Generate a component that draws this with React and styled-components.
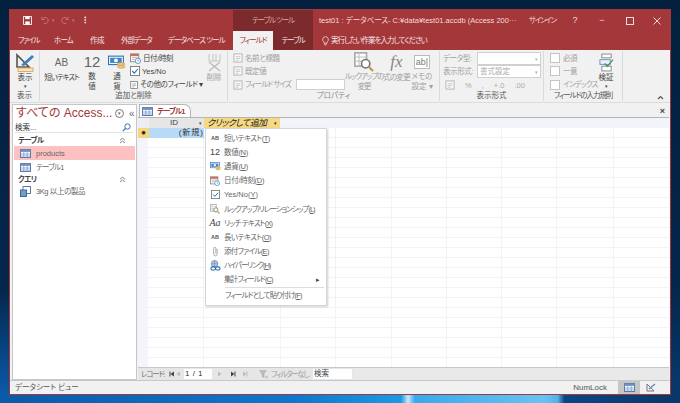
import React from 'react';
import styled, { createGlobalStyle } from 'styled-components';

const GlobalStyle = createGlobalStyle`
  html, body { margin: 0; padding: 0; }
  body {
    width: 680px;
    height: 403px;
    overflow: hidden;
    font-family: "Liberation Sans", "Noto Sans CJK JP", sans-serif;
    font-feature-settings: "palt" 1;
  }
`;

const menuItems = [
  { id: 'ab', label: '短いテキスト(T)', ls: -0.5 },
  { id: 'num', label: '数値(N)', ls: -0.3 },
  { id: 'money', label: '通貨(U)', ls: -0.3 },
  { id: 'date', label: '日付/時刻(D)', ls: -0.3 },
  { id: 'check', label: 'Yes/No(Y)', ls: 0 },
  { id: 'lookup', label: 'ルックアップ/リレーションシップ(L)', ls: -1 },
  { id: 'rich', label: 'リッチ テキスト(X)', ls: -0.8 },
  { id: 'ab2', label: '長いテキスト(O)', ls: -0.5 },
  { id: 'clip', label: '添付ファイル(E)', ls: -0.7 },
  { id: 'link', label: 'ハイパーリンク(H)', ls: -1.2 },
  { id: 'none', label: '集計フィールド(C)', ls: -0.9 },
];

function underlineKey(label) {
  const m = label.match(/^(.*\()(.)(\))$/);
  if (!m) return label;
  return <>{m[1]}<u>{m[2]}</u>{m[3]}</>;
}

const TableIcon = ({ size = 11 }) => (
  <svg width={size} height={size - 2} viewBox="0 0 11 9">
    <rect x="0.5" y="0.5" width="10" height="8" fill="#fff" stroke="#5c78a8" />
    <rect x="0.5" y="0.5" width="10" height="2.4" fill="#6f8fc4" />
    <path d="M0.5 5h10M0.5 7h10M3.8 3v5.5M7.2 3v5.5" stroke="#6f8fc4" strokeWidth="0.7" />
  </svg>
);

const SmallDoc = ({ faded }) => (
  <svg width="10" height="10" viewBox="0 0 11 11" opacity={faded ? 0.5 : 1}>
    <rect x="1" y="1" width="9" height="9" fill="#fff" stroke="#777" />
    <path d="M3 4h5M3 6h5M3 8h3" stroke="#888" strokeWidth="0.8" />
  </svg>
);

const MoneyIcon = ({ w = 17, h = 13 }) => (
  <svg width={w} height={h} viewBox="0 0 17 13">
    <rect x="0.5" y="0.5" width="14" height="8" fill="#fff" stroke="#2a6db0" />
    <rect x="2" y="2" width="11" height="5" fill="#3f86c8" />
    <circle cx="7.5" cy="4.5" r="1.8" fill="#fff" />
    <ellipse cx="12.5" cy="8" rx="3.6" ry="1.5" fill="#f2c27c" stroke="#c79044" strokeWidth="0.5" />
    <ellipse cx="12.5" cy="10.5" rx="3.6" ry="1.5" fill="#f2c27c" stroke="#c79044" strokeWidth="0.5" />
  </svg>
);

const DateIcon = ({ size = 11 }) => (
  <svg width={size} height={size} viewBox="0 0 12 12">
    <rect x="0.5" y="1" width="9" height="8.5" fill="#fff" stroke="#888" />
    <rect x="0.5" y="1" width="9" height="2.4" fill="#c9705f" />
    <path d="M2 5h6M2 7h3" stroke="#999" strokeWidth="0.8" />
    <circle cx="8.6" cy="8.6" r="2.9" fill="#fff" stroke="#5a92c8" />
    <path d="M8.6 7v1.7h1.4" stroke="#5a92c8" strokeWidth="0.7" fill="none" />
  </svg>
);

const CheckIcon = ({ size = 10 }) => (
  <svg width={size} height={size} viewBox="0 0 11 11">
    <rect x="0.5" y="0.5" width="10" height="10" fill="#fff" stroke="#777" />
    <path d="M2.5 5.5l2.2 2.3 4-4.5" stroke="#2a6db0" strokeWidth="1.2" fill="none" />
  </svg>
);

const LookupIcon = ({ size = 11 }) => (
  <svg width={size} height={size} viewBox="0 0 12 12">
    <rect x="0.5" y="0.5" width="7" height="8" fill="#fff" stroke="#aaa" />
    <path d="M0.5 3h7M0.5 5.5h7M3 0.5v8" stroke="#c4c4c4" strokeWidth="0.7" />
    <circle cx="7" cy="7" r="2.5" fill="#fff" stroke="#777" />
    <path d="M9 9l2.4 2.4" stroke="#c79044" strokeWidth="1.3" />
  </svg>
);

const ClipIcon = () => (
  <svg width="9" height="11" viewBox="0 0 10 12">
    <path d="M6.8 3v6a1.9 1.9 0 0 1-3.8 0V2.6a1.2 1.2 0 0 1 2.4 0v5.8" fill="none" stroke="#999" strokeWidth="0.9" />
  </svg>
);

const LinkIcon = () => (
  <svg width="11" height="11" viewBox="0 0 12 12">
    <circle cx="5" cy="4" r="3.5" fill="#b5c9df" stroke="#5b7fa8" strokeWidth="0.7" />
    <path d="M1.5 4h7M5 .5v7" stroke="#5b7fa8" strokeWidth="0.5" />
    <rect x="1" y="7.5" width="5" height="3.5" rx="1.7" fill="none" stroke="#2a68ad" strokeWidth="1.1" />
    <rect x="6" y="7.5" width="5" height="3.5" rx="1.7" fill="none" stroke="#2a68ad" strokeWidth="1.1" />
  </svg>
);

const FoldIcon = () => (
  <svg width="7" height="7" viewBox="0 0 7 7">
    <path d="M1 3.2l2.5-2 2.5 2M1 6l2.5-2 2.5 2" fill="none" stroke="#666" strokeWidth="0.8" />
  </svg>
);

const NavArrow = ({ dir, bar, dim }) => (
  <svg width="6" height="6" viewBox="0 0 6 6">
    <path d={dir === 'left' ? 'M5 .5v5L1.5 3z' : 'M1 .5v5L4.5 3z'} fill={dim ? '#bdbdbd' : '#444'} />
    {bar && <path d={dir === 'left' ? 'M1 .5v5' : 'M5 .5v5'} stroke={dim ? '#bdbdbd' : '#444'} />}
  </svg>
);

function MenuIcon({ id }) {
  if (id === 'ab' || id === 'ab2') return <MiniAb>AB</MiniAb>;
  if (id === 'num') return <MiniNum>12</MiniNum>;
  if (id === 'money') return <MoneyIcon w={11} h={9} />;
  if (id === 'date') return <DateIcon size={10} />;
  if (id === 'check') return <CheckIcon size={9} />;
  if (id === 'lookup') return <LookupIcon size={10} />;
  if (id === 'rich') return <MiniRich>Aa</MiniRich>;
  if (id === 'clip') return <ClipIcon />;
  if (id === 'link') return <LinkIcon />;
  return null;
}

export default function App() {
  return (
    <Desktop>
      <GlobalStyle />
      <Win>
        <TitleBar>
          <Qat>
            <svg width="9" height="9" viewBox="0 0 10 10">
              <path d="M0.5 0.5h9v9h-9z" fill="none" stroke="#fff" />
              <rect x="2.5" y="0.5" width="5" height="3" fill="#fff" />
              <rect x="2.5" y="6" width="5" height="3.5" fill="#fff" />
            </svg>
            <QatDim $left={9}>
              <svg width="8" height="8" viewBox="0 0 9 9">
                <path d="M1 1v3h3M1.5 4A3.4 3.4 0 1 1 3 8" fill="none" stroke="#c9797b" strokeWidth="1" />
              </svg>
            </QatDim>
            <QatCaret>▾</QatCaret>
            <QatDim $left={6}>
              <svg width="8" height="8" viewBox="0 0 9 9">
                <path d="M8 1v3H5M7.5 4A3.4 3.4 0 1 0 6 8" fill="none" stroke="#c9797b" strokeWidth="1" />
              </svg>
            </QatDim>
            <QatCaret>▾</QatCaret>
            <QatMore>⁝</QatMore>
          </Qat>
          <ToolsBand>テーブル ツール</ToolsBand>
          <DocTitle>test01 : データベース- C:¥data¥test01.accdb (Access 200···</DocTitle>
          <SignIn>サインイン</SignIn>
          <CtrlBtn $w={26}>?</CtrlBtn>
          <CtrlBtn $w={28}>−</CtrlBtn>
          <CtrlBtn $w={28}>
            <svg width="8" height="8" viewBox="0 0 8 8"><rect x="0.5" y="0.5" width="7" height="7" fill="none" stroke="#f3dcdc" /></svg>
          </CtrlBtn>
          <CtrlBtn $w={26}>
            <svg width="8" height="8" viewBox="0 0 8 8"><path d="M0.5 0.5l7 7M7.5 0.5l-7 7" stroke="#f3dcdc" /></svg>
          </CtrlBtn>
        </TitleBar>

        <TabRow>
          <MainTab $w={36} $ls={-1.2}>ファイル</MainTab>
          <MainTab $w={36} $ls={-0.8}>ホーム</MainTab>
          <MainTab $w={31} $ls={-0.5}>作成</MainTab>
          <MainTab $w={47} $ls={-1.1}>外部データ</MainTab>
          <MainTab $w={73} $ls={-0.9}>データベース ツール</MainTab>
          <ToolTabs>
            <ActiveTab>フィールド</ActiveTab>
            <ToolTab>テーブル</ToolTab>
          </ToolTabs>
          <Tell>
            <svg width="7" height="10" viewBox="0 0 7 10">
              <path d="M3.5 .7a2.8 2.8 0 0 0-1.5 5.2v1.4h3V5.9a2.8 2.8 0 0 0-1.5-5.2zM2.2 8.8h2.6" fill="none" stroke="#f3dcdc" strokeWidth="0.8" />
            </svg>
            実行したい作業を入力してください
          </Tell>
        </TabRow>

        <Ribbon>
          <Group $w={30}>
            <GroupBody $pad="1px 0 0 4px">
              <LargeBtn $w={22}>
                <IconSlot>
                  <svg width="19" height="20" viewBox="0 0 19 20">
                    <path d="M1 2v12h12z" fill="none" stroke="#555" strokeWidth="1.6" />
                    <path d="M5 12L16 2l2 2L8 13z" fill="#3f7fc0" />
                    <rect x="2" y="15" width="15" height="3.5" fill="#f7e6bf" stroke="#d79c4a" strokeWidth="0.8" />
                  </svg>
                </IconSlot>
                <LargeLabel>表示</LargeLabel>
                <Caret>▾</Caret>
              </LargeBtn>
            </GroupBody>
            <GroupLabel>表示</GroupLabel>
          </Group>

          <Group $w={188}>
            <GroupBody $pad="1px 0 0 3px">
              <LargeBtn $w={37}>
                <IconSlot><AbGlyph>AB</AbGlyph></IconSlot>
                <LargeLabel $ls={-1}>短いテキスト</LargeLabel>
              </LargeBtn>
              <LargeBtn $w={24}>
                <IconSlot><NumGlyph>12</NumGlyph></IconSlot>
                <LargeLabel>数<br />値</LargeLabel>
              </LargeBtn>
              <LargeBtn $w={26}>
                <IconSlot><MoneyIcon w={18} h={15} /></IconSlot>
                <LargeLabel>通<br />貨</LargeLabel>
              </LargeBtn>
              <SmallColumn $w={73}>
                <SmallRow><DateIcon />日付/時刻</SmallRow>
                <SmallRow $ls={0}><CheckIcon />Yes/No</SmallRow>
                <SmallRow><SmallDoc />その他のフィールド ▾</SmallRow>
              </SmallColumn>
              <LargeBtn $w={22} $faded>
                <IconSlot>
                  <svg width="15" height="20" viewBox="0 0 15 20">
                    <path d="M2 1v7h11V1M6 1v7M9 1v7" fill="none" stroke="#c4c4c4" />
                    <path d="M2 9l11 9M13 9L2 18" stroke="#bbb" strokeWidth="1.3" />
                  </svg>
                </IconSlot>
                <LargeLabel>削除</LargeLabel>
              </LargeBtn>
            </GroupBody>
            <GroupLabel>追加と削除</GroupLabel>
          </Group>

          <Group $w={212}>
            <GroupBody $pad="1px 0 0 5px">
              <SmallColumn $w={112} $faded>
                <SmallRow><SmallDoc faded />名前と標題</SmallRow>
                <SmallRow><SmallDoc faded />既定値</SmallRow>
                <SmallRow $ls={-1}>
                  <SmallDoc faded />フィールド サイズ
                  <SizeInput />
                </SmallRow>
              </SmallColumn>
              <LargeBtn $w={38} $faded>
                <IconSlot><LookupIcon size={20} /></IconSlot>
                <LargeLabel $ls={-1.2}>ルックアップの<br />変更</LargeLabel>
              </LargeBtn>
              <LargeBtn $w={27} $faded>
                <IconSlot><FxGlyph>fx</FxGlyph></IconSlot>
                <LargeLabel $ls={-0.7}>式の変更</LargeLabel>
              </LargeBtn>
              <LargeBtn $w={24} $faded>
                <IconSlot><AbBox>ab|</AbBox></IconSlot>
                <LargeLabel>メモの<br />設定 ▾</LargeLabel>
              </LargeBtn>
            </GroupBody>
            <GroupLabel $faded>プロパティ</GroupLabel>
          </Group>

          <Group $w={104}>
            <FormatBody>
              <FormatRow>
                <FormatLabel>データ型:</FormatLabel>
                <FormatSelect><SelectCaret>▾</SelectCaret></FormatSelect>
              </FormatRow>
              <FormatRow>
                <FormatLabel>表示形式:</FormatLabel>
                <FormatSelect>書式設定<SelectCaret>▾</SelectCaret></FormatSelect>
              </FormatRow>
              <NumberTools>
                <SmallDoc faded /><span>%</span><span>,</span><span>+.0</span><span>.00</span>
              </NumberTools>
            </FormatBody>
            <GroupLabel>表示形式</GroupLabel>
          </Group>

          <Group $w={79}>
            <GroupBody $pad="1px 0 0 6px">
              <SmallColumn $w={47} $faded>
                <SmallRow><CheckBox />必須</SmallRow>
                <SmallRow><CheckBox />一意</SmallRow>
                <SmallRow $ls={-0.8}><CheckBox />インデックス</SmallRow>
              </SmallColumn>
              <LargeBtn $w={18}>
                <IconSlot>
                  <svg width="15" height="19" viewBox="0 0 16 20">
                    <rect x="3" y="1" width="10" height="4" fill="#fff" stroke="#888" />
                    <rect x="1" y="7" width="11" height="5" fill="#eef" stroke="#6f8fc4" />
                    <rect x="3" y="14" width="10" height="5" fill="#fff" stroke="#888" />
                    <path d="M6 11l3 3 6-7" fill="none" stroke="#3a9a5a" strokeWidth="1.4" />
                  </svg>
                </IconSlot>
                <LargeLabel>検証</LargeLabel>
                <Caret>▾</Caret>
              </LargeBtn>
            </GroupBody>
            <GroupLabel $ls={-1.1}>フィールドの入力規則</GroupLabel>
          </Group>
          <Collapse>
            <svg width="7" height="5" viewBox="0 0 7 5">
              <path d="M1 4l2.5-2.5L6 4" fill="none" stroke="#555" strokeWidth="1.2" />
            </svg>
          </Collapse>
        </Ribbon>

        <Main>
          <NavPane>
            <NavHeader>
              <NavTitle>すべての Access...</NavTitle>
              <NavRound>▾</NavRound>
              <NavShutter>«</NavShutter>
            </NavHeader>
            <NavSearch>
              検索...
              <svg width="9" height="9" viewBox="0 0 9 9">
                <circle cx="5.5" cy="3.5" r="2.7" fill="none" stroke="#3f6fa8" />
                <path d="M3.5 5.5L.8 8.2" stroke="#3f6fa8" strokeWidth="1.2" />
              </svg>
            </NavSearch>
            <NavGroup $first>テーブル<FoldIcon /></NavGroup>
            <NavItem $active $ls={0}><TableIcon />products</NavItem>
            <NavItem $ls={-0.8}><TableIcon />テーブル1</NavItem>
            <NavGroup>クエリ<FoldIcon /></NavGroup>
            <NavItem $ls={-0.4}>
              <svg width="11" height="11" viewBox="0 0 11 11">
                <rect x="3" y="0.5" width="7.5" height="7" fill="#fff" stroke="#5c78a8" />
                <rect x="0.5" y="4" width="6" height="6.5" fill="#6f9fc8" stroke="#3f6a98" />
              </svg>
              3Kg 以上の製品
            </NavItem>
          </NavPane>

          <Work>
            <DocTabs>
              <DocTab><TableIcon />テーブル1</DocTab>
              <DocClose>×</DocClose>
            </DocTabs>
            <Sheet>
              <HeadRow>
                <CornerCell />
                <IdHead>ID<HeadCaret>▾</HeadCaret></IdHead>
                <AddHead>クリックして追加<HeadCaret>▾</HeadCaret></AddHead>
              </HeadRow>
              <DataRow>
                <Selector>✸</Selector>
                <NewCell>(新規)</NewCell>
              </DataRow>
              <FieldMenu>
                {menuItems.map((item) => (
                  <MenuItem key={item.label}>
                    <MenuIconCol><MenuIcon id={item.id} /></MenuIconCol>
                    <MenuText $ls={item.ls}>{underlineKey(item.label)}</MenuText>
                    {item.id === 'none' && <MenuArrow>▸</MenuArrow>}
                  </MenuItem>
                ))}
                <MenuSep />
                <PasteItem>フィールドとして貼り付け(<u>F</u>)</PasteItem>
              </FieldMenu>
            </Sheet>
            <RecordBar>
              <RecLabel>レコード:</RecLabel>
              <RecNavs $w={15}>
                <NavArrow dir="left" bar />
                <NavArrow dir="left" dim />
              </RecNavs>
              <RecInput>1 / 1</RecInput>
              <RecNavs $w={34}>
                <NavArrow dir="right" dim />
                <NavArrow dir="right" bar />
                <NavArrow dir="right" bar dim />
              </RecNavs>
              <FilterBtn>
                <svg width="10" height="9" viewBox="0 0 10 9">
                  <path d="M0.5 0.5h7L5 4v3.5L3 6.5V4z" fill="#bbb" stroke="#aaa" strokeWidth="0.5" />
                  <path d="M6 6l3 2.5M9 6L6 8.5" stroke="#bbb" />
                </svg>
                フィルターなし
              </FilterBtn>
              <RecSearch>検索</RecSearch>
              <RecScroll />
            </RecordBar>
          </Work>
        </Main>

        <StatusBar>
          <StatusText>データシート ビュー</StatusText>
          <NumLock>NumLock</NumLock>
          <ViewBtn $on><TableIcon /></ViewBtn>
          <ViewBtn>
            <svg width="10" height="9" viewBox="0 0 10 9">
              <path d="M1 1v7h7z" fill="none" stroke="#777" />
              <path d="M3 6l6-5" stroke="#5c88b8" strokeWidth="1.3" />
            </svg>
          </ViewBtn>
        </StatusBar>
      </Win>
    </Desktop>
  );
}

const Desktop = styled.div`
  width: 680px;
  height: 403px;
  box-sizing: border-box;
  padding: 10px 10px 9px;
  overflow: hidden;
  background:
    linear-gradient(180deg, #03203f 0%, #04274c 72%, rgba(4, 50, 100, 0.25) 93%, transparent 98%),
    linear-gradient(90deg, #0a5aa8 0%, #0d78cf 44%, #1a9ae4 59%, #c8eafa 60%, #38a9ec 61%, #66c3f2 80%, #54b2ea 82%, #0a4684 83%, #093768 100%);
`;

const Win = styled.div`
  height: 384px;
  display: flex;
  flex-direction: column;
  background: #f1f1f1;
  box-shadow: 0 0 0 1px #a4373a;
  color: #444;
  font-size: 7.5px;
  line-height: 1.2;
  overflow: hidden;
`;

const TitleBar = styled.div`
  height: 21px;
  flex: none;
  display: flex;
  align-items: center;
  background: #a4373a;
  color: #f3dcdc;
`;

const Qat = styled.div`
  width: 223px;
  box-sizing: border-box;
  padding-left: 13px;
  display: flex;
  align-items: center;
`;

const QatDim = styled.span`
  display: flex;
  margin-left: ${(p) => p.$left}px;
`;

const QatCaret = styled.span`
  font-size: 5px;
  color: #c9797b;
  margin-left: 3px;
`;

const QatMore = styled.span`
  margin-left: 9px;
  font-size: 9px;
  font-weight: bold;
  color: #fff;
`;

const ToolsBand = styled.div`
  width: 80px;
  height: 21px;
  flex: none;
  display: flex;
  align-items: center;
  justify-content: center;
  background: #7c2a2c;
  color: #dba9aa;
  letter-spacing: -1.1px;
`;

const DocTitle = styled.div`
  width: 210px;
  flex: none;
  padding-left: 6px;
  box-sizing: border-box;
  white-space: nowrap;
`;

const SignIn = styled.div`
  width: 33px;
  flex: none;
  margin-left: 6px;
  white-space: nowrap;
  letter-spacing: -1.4px;
`;

const CtrlBtn = styled.div`
  width: ${(p) => p.$w}px;
  flex: none;
  display: flex;
  justify-content: center;
  align-items: center;
  font-size: 9px;
`;

const TabRow = styled.div`
  height: 19px;
  flex: none;
  display: flex;
  align-items: stretch;
  background: #a4373a;
  color: #f5e3e3;
`;

const MainTab = styled.div`
  width: ${(p) => p.$w}px;
  flex: none;
  padding-left: 8px;
  box-sizing: border-box;
  display: flex;
  align-items: center;
  white-space: nowrap;
  letter-spacing: ${(p) => p.$ls}px;
`;

const ToolTabs = styled.div`
  width: 80px;
  flex: none;
  display: flex;
  background: #7c2a2c;
  letter-spacing: -1.1px;
`;

const ActiveTab = styled.div`
  width: 40px;
  display: flex;
  align-items: center;
  justify-content: center;
  background: #f1f1f1;
  color: #a4373a;
  white-space: nowrap;
`;

const ToolTab = styled.div`
  width: 40px;
  display: flex;
  align-items: center;
  justify-content: center;
  white-space: nowrap;
`;

const Tell = styled.div`
  padding-left: 9px;
  display: flex;
  align-items: center;
  gap: 2px;
  white-space: nowrap;
  letter-spacing: -1px;
`;

const Ribbon = styled.div`
  height: 53px;
  flex: none;
  display: flex;
  background: #f1f1f1;
  border-bottom: 1px solid #dcdcdc;
  box-sizing: border-box;
`;

const Group = styled.div`
  width: ${(p) => p.$w}px;
  flex: none;
  box-sizing: border-box;
  display: flex;
  flex-direction: column;
  border-right: 1px solid #dadada;
  margin: 1px 0;
`;

const GroupBody = styled.div`
  flex: 1;
  min-height: 0;
  display: flex;
  padding: ${(p) => p.$pad};
`;

const GroupLabel = styled.div`
  height: 10px;
  line-height: 10px;
  text-align: center;
  white-space: nowrap;
  color: ${(p) => (p.$faded ? '#888' : '#555')};
  letter-spacing: ${(p) => p.$ls ?? 0}px;
`;

const LargeBtn = styled.div`
  width: ${(p) => p.$w}px;
  flex: none;
  display: flex;
  flex-direction: column;
  align-items: center;
  text-align: center;
  color: ${(p) => (p.$faded ? '#a0a0a0' : '#444')};
`;

const IconSlot = styled.div`
  height: 21px;
  display: flex;
  align-items: center;
  justify-content: center;
`;

const LargeLabel = styled.div`
  line-height: 9.5px;
  white-space: nowrap;
  letter-spacing: ${(p) => p.$ls ?? 0}px;
`;

const Caret = styled.div`
  font-size: 5px;
  line-height: 6px;
`;

const AbGlyph = styled.span`
  font-size: 10px;
  color: #666;
`;

const NumGlyph = styled.span`
  font-size: 15px;
  color: #666;
`;

const FxGlyph = styled.span`
  font-family: "Liberation Serif", serif;
  font-style: italic;
  font-size: 17px;
  color: #888;
`;

const AbBox = styled.span`
  font-size: 9px;
  color: #777;
  border: 1px solid #bbb;
  padding: 1px;
  background: #fff;
`;

const SmallColumn = styled.div`
  width: ${(p) => p.$w}px;
  flex: none;
  display: flex;
  flex-direction: column;
  gap: 1px;
  color: ${(p) => (p.$faded ? '#a0a0a0' : '#444')};
`;

const SmallRow = styled.div`
  height: 13px;
  display: flex;
  align-items: center;
  gap: 2px;
  white-space: nowrap;
  letter-spacing: ${(p) => p.$ls ?? -0.4}px;
`;

const SizeInput = styled.span`
  flex: 1;
  height: 11px;
  background: #fff;
  border: 1px solid #cfcfcf;
  box-sizing: border-box;
  margin-left: 3px;
`;

const FormatBody = styled.div`
  flex: 1;
  min-height: 0;
  padding: 1px 2px 0 3px;
  display: flex;
  flex-direction: column;
  color: #a0a0a0;
`;

const FormatRow = styled.div`
  height: 13px;
  display: flex;
  align-items: center;
`;

const FormatLabel = styled.div`
  width: 34px;
  flex: none;
  white-space: nowrap;
  letter-spacing: -0.4px;
`;

const FormatSelect = styled.div`
  flex: 1;
  height: 13px;
  box-sizing: border-box;
  border: 1px solid #d0d0d0;
  background: #fff;
  padding-left: 2px;
  display: flex;
  align-items: center;
  color: #aaa;
`;

const SelectCaret = styled.span`
  font-size: 5px;
  padding-right: 2px;
  margin-left: auto;
  color: #aaa;
`;

const NumberTools = styled.div`
  display: flex;
  gap: 10px;
  height: 13px;
  margin-top: 1px;
  align-items: center;
  padding-left: 2px;
  color: #aaa;
`;

const CheckBox = styled.span`
  width: 8px;
  height: 8px;
  flex: none;
  background: #fff;
  border: 1px solid #c4c4c4;
  margin-right: 1px;
`;

const Collapse = styled.div`
  margin-left: auto;
  margin-right: 6px;
  align-self: flex-end;
  padding-bottom: 2px;
  display: flex;
`;

const Main = styled.div`
  flex: 1;
  min-height: 0;
  display: flex;
  background: #f1f1f1;
  padding-top: 1px;
`;

const NavPane = styled.div`
  width: 125px;
  flex: none;
  margin-left: 2px;
  box-sizing: border-box;
  background: #fff;
  border: 1px solid #c6c6c6;
  display: flex;
  flex-direction: column;
`;

const NavHeader = styled.div`
  height: 17px;
  flex: none;
  display: flex;
  align-items: center;
  padding-left: 3px;
`;

const NavTitle = styled.div`
  font-size: 12px;
  color: #a4373a;
  white-space: nowrap;
  width: 99px;
  flex: none;
`;

const NavRound = styled.div`
  width: 7px;
  height: 7px;
  flex: none;
  border: 1px solid #777;
  border-radius: 50%;
  font-size: 5px;
  line-height: 7px;
  text-align: center;
  color: #666;
`;

const NavShutter = styled.div`
  margin-left: 5px;
  font-size: 10px;
  color: #666;
`;

const NavSearch = styled.div`
  height: 11px;
  flex: none;
  margin-left: 2px;
  width: 118px;
  background: #fff;
  border-bottom: 1px solid #e2e2e2;
  display: flex;
  align-items: center;
  justify-content: space-between;
  padding-right: 2px;
  box-sizing: border-box;
  color: #333;
`;

const NavGroup = styled.div`
  height: 10px;
  flex: none;
  margin: ${(p) => (p.$first ? '2px 0 1px' : '0')};
  padding: 0 10px 0 5px;
  display: flex;
  align-items: center;
  justify-content: space-between;
  font-weight: bold;
  color: #444;
  letter-spacing: -0.6px;
`;

const NavItem = styled.div`
  height: 14px;
  flex: none;
  display: flex;
  align-items: center;
  gap: 5px;
  padding-left: 6px;
  margin: 0 1px;
  white-space: nowrap;
  color: #666;
  letter-spacing: ${(p) => p.$ls}px;
  background: ${(p) => (p.$active ? '#fdc1c1' : 'transparent')};
`;

const Work = styled.div`
  flex: 1;
  min-width: 0;
  margin-left: 1px;
  display: flex;
  flex-direction: column;
  padding-right: 1px;
`;

const DocTabs = styled.div`
  height: 14px;
  flex: none;
  display: flex;
  justify-content: space-between;
  align-items: flex-end;
  border-bottom: 1px solid #b5b5b5;
  box-sizing: border-box;
`;

const DocTab = styled.div`
  width: 52px;
  height: 13px;
  margin-left: 1px;
  box-sizing: border-box;
  background: #fff;
  border: 1px solid #b5b5b5;
  border-bottom: none;
  border-top-right-radius: 7px;
  display: flex;
  align-items: center;
  gap: 4px;
  padding-left: 2px;
  color: #a4373a;
  font-weight: bold;
  white-space: nowrap;
  letter-spacing: -0.9px;
`;

const DocClose = styled.div`
  font-size: 9px;
  line-height: 12px;
  margin-right: 4px;
  font-weight: bold;
  color: #444;
`;

const Sheet = styled.div`
  flex: 1;
  min-height: 0;
  position: relative;
  background-color: #fff;
  background-image:
    linear-gradient(90deg, #f3f5fb 0 10px, transparent 10px),
    linear-gradient(#f2f4fa 0 10px, transparent 10px),
    repeating-linear-gradient(180deg, transparent 0 9px, #f3f3f3 9px 10px),
    linear-gradient(90deg, transparent 65px, #f3f3f3 65px 66px, transparent 66px 142px, #f3f3f3 142px 143px, transparent 143px 197px, #f3f3f3 197px 198px, transparent 198px 253px, #f3f3f3 253px 254px, transparent 254px 308px, #f3f3f3 308px 309px, transparent 309px 363px, #f3f3f3 363px 364px, transparent 364px 418px, #f3f3f3 418px 419px, transparent 419px 475px, #f3f3f3 475px 476px, transparent 476px);
`;

const HeadRow = styled.div`
  height: 10px;
  display: flex;
`;

const CornerCell = styled.div`
  width: 11px;
  flex: none;
  background: #eceef3;
`;

const IdHead = styled.div`
  width: 55px;
  flex: none;
  box-sizing: border-box;
  background: #e6e6e6;
  display: flex;
  justify-content: space-between;
  align-items: center;
  padding-left: 21px;
  padding-right: 2px;
  color: #444;
  font-size: 8px;
`;

const AddHead = styled.div`
  width: 76px;
  flex: none;
  box-sizing: border-box;
  background: #f6d983;
  display: flex;
  justify-content: space-between;
  align-items: center;
  padding: 0 4px 0 3px;
  font-style: italic;
  font-size: 9px;
  letter-spacing: -0.6px;
  color: #222;
  white-space: nowrap;
`;

const HeadCaret = styled.span`
  font-size: 5px;
  font-style: normal;
`;

const DataRow = styled.div`
  height: 10px;
  display: flex;
`;

const Selector = styled.div`
  width: 11px;
  flex: none;
  background: #f5d77c;
  font-size: 6px;
  line-height: 10px;
  text-align: center;
  color: #222;
`;

const NewCell = styled.div`
  width: 55px;
  flex: none;
  box-sizing: border-box;
  background: #b9daf6;
  text-align: right;
  line-height: 10px;
  font-size: 8px;
  letter-spacing: 1px;
  color: #333;
  white-space: nowrap;
`;

const FieldMenu = styled.div`
  position: absolute;
  left: 67px;
  top: 10px;
  width: 122px;
  box-sizing: border-box;
  padding: 2px 0 3px;
  background: #fff;
  border: 1px solid #d5d5d5;
  box-shadow: 1px 1px 2px rgba(0, 0, 0, 0.18);
  color: #666;
`;

const MenuItem = styled.div`
  height: 14.2px;
  display: flex;
  align-items: center;
  white-space: nowrap;
`;

const MenuIconCol = styled.div`
  width: 18px;
  flex: none;
  display: flex;
  justify-content: center;
  align-items: center;
`;

const MenuText = styled.span`
  flex: 1;
  letter-spacing: ${(p) => p.$ls}px;
`;

const MenuArrow = styled.span`
  font-size: 7px;
  color: #444;
  margin-right: 6px;
`;

const MenuSep = styled.div`
  height: 1px;
  margin: 0 2px 0 19px;
  background: #dedede;
`;

const PasteItem = styled.div`
  height: 14px;
  display: flex;
  align-items: center;
  padding-left: 19px;
  white-space: nowrap;
  letter-spacing: -0.9px;
`;

const MiniAb = styled.span`
  font-size: 5.5px;
  font-weight: bold;
  color: #555;
`;

const MiniNum = styled.span`
  font-size: 9px;
  color: #444;
`;

const MiniRich = styled.span`
  font-family: "Liberation Serif", serif;
  font-style: italic;
  font-size: 10px;
  color: #444;
`;

const RecordBar = styled.div`
  height: 12px;
  flex: none;
  display: flex;
  align-items: center;
  background: #e6e6e6;
  border-top: 1px solid #c8c8c8;
  color: #777;
  white-space: nowrap;
  padding-left: 3px;
`;

const RecLabel = styled.span`
  width: 28px;
  flex: none;
  letter-spacing: -1.2px;
`;

const RecNavs = styled.span`
  width: ${(p) => p.$w}px;
  flex: none;
  box-sizing: border-box;
  display: flex;
  align-items: center;
  justify-content: space-between;
  padding: 0 3px 0 0;
`;

const RecInput = styled.span`
  width: 28px;
  height: 10px;
  flex: none;
  background: #fff;
  line-height: 10px;
  font-size: 8px;
  padding-left: 1px;
  margin-right: 5px;
  color: #333;
  letter-spacing: 0.5px;
  box-sizing: border-box;
`;

const FilterBtn = styled.span`
  width: 62px;
  flex: none;
  display: flex;
  align-items: center;
  gap: 2px;
  padding-left: 8px;
  color: #a0a0a0;
  box-sizing: border-box;
  letter-spacing: -1.3px;
`;

const RecSearch = styled.span`
  width: 39px;
  height: 10px;
  flex: none;
  background: #fff;
  padding-left: 1px;
  line-height: 10px;
  color: #444;
  box-sizing: border-box;
`;

const RecScroll = styled.span`
  flex: 1;
  height: 12px;
  margin-left: 1px;
  background: #e9e9e9;
`;

const StatusBar = styled.div`
  height: 13px;
  flex: none;
  display: flex;
  align-items: center;
  background: #f1f1f1;
  border-top: 1px solid #c8c8c8;
`;

const StatusText = styled.div`
  padding-left: 5px;
  color: #555;
  white-space: nowrap;
`;

const NumLock = styled.div`
  margin-left: auto;
  margin-right: 11px;
  font-size: 8px;
  color: #555;
`;

const ViewBtn = styled.div`
  width: 22px;
  height: 13px;
  display: flex;
  align-items: center;
  justify-content: center;
  margin-right: ${(p) => (p.$on ? 0 : 8)}px;
  background: ${(p) => (p.$on ? '#c6c6c6' : 'transparent')};
`;
